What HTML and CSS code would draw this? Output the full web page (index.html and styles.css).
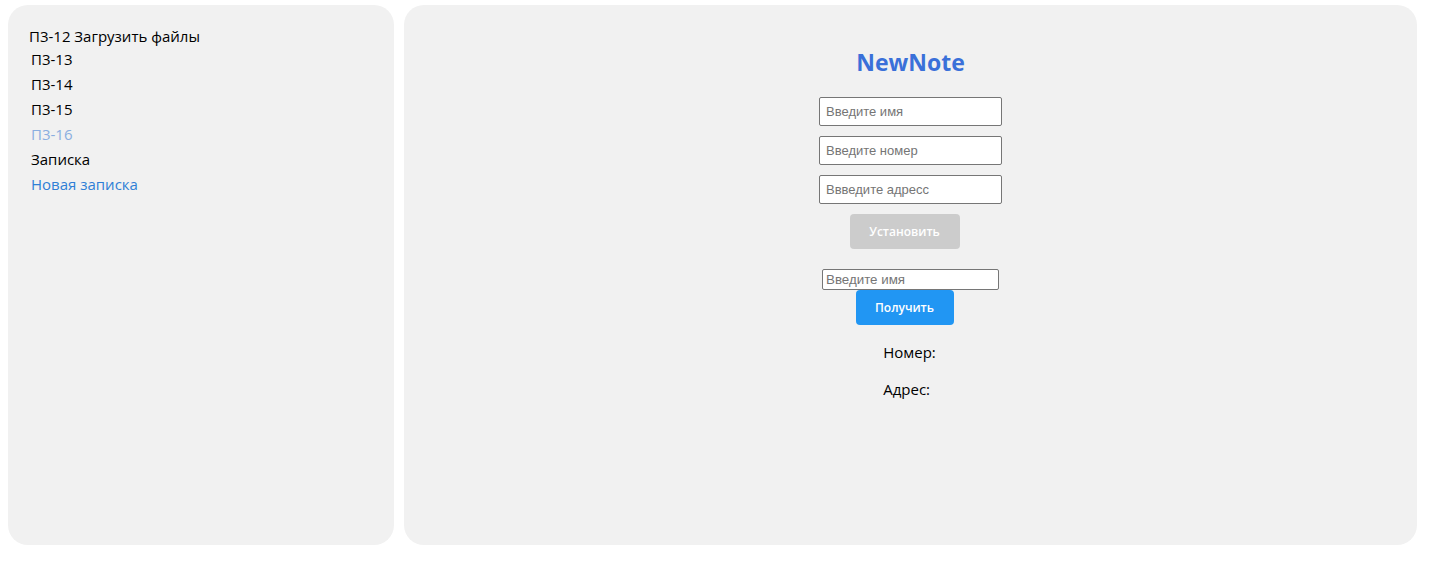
FILE: index.html
```html
<!DOCTYPE html>
<html lang="ru">
<head>
<meta charset="utf-8">
<title>NewNote</title>
<link rel="stylesheet" href="styles.css">
</head>
<body>
<div class="layout">
  <aside class="sidebar">
    <div class="sidebar-head">П3-12 Загрузить файлы</div>
    <ul class="nav">
      <li><a class="nav-link">П3-13</a></li>
      <li><a class="nav-link">П3-14</a></li>
      <li><a class="nav-link">П3-15</a></li>
      <li><a class="nav-link muted">П3-16</a></li>
      <li><a class="nav-link">Записка</a></li>
      <li><a class="nav-link accent">Новая записка</a></li>
    </ul>
  </aside>
  <main class="main">
    <h1 class="title">NewNote</h1>
    <div class="form">
      <input class="field" type="text" placeholder="Введите имя">
      <input class="field" type="text" placeholder="Введите номер">
      <input class="field" type="text" placeholder="Ввведите адресс">
      <button class="btn btn-set">Установить</button>
    </div>
    <div class="lookup">
      <input class="field-small" type="text" placeholder="Введите имя">
      <button class="btn btn-get">Получить</button>
    </div>
    <div class="info-block">
      <p class="info">Номер:</p>
      <p class="info info-addr">Адрес:</p>
    </div>
  </main>
</div>
</body>
</html>
```

FILE: styles.css
```css
* { box-sizing: border-box; }
html, body { background: #fff; }
body {
  margin: 0;
  padding: 5px 8px;
  font-family: "Open Sans", "Noto Sans", sans-serif;
  color: #000;
}
.layout {
  display: flex;
  gap: 10px;
}
.sidebar {
  width: 386px;
  height: 540px;
  background: #f1f1f1;
  border-radius: 20px;
  padding: 20px 0 0 21px;
}
.sidebar-head {
  font-size: 15px;
  line-height: 22px;
}
.nav {
  list-style: none;
  margin: 0;
  padding: 0 0 0 2px;
}
.nav-link {
  display: block;
  font-size: 15px;
  line-height: 25px;
  color: #000;
  text-decoration: none;
}
.nav-link.muted { color: #8aaee0; }
.nav-link.accent { color: #2f7fd6; }
.main {
  width: 1013px;
  height: 540px;
  background: #f1f1f1;
  border-radius: 20px;
  display: flex;
  flex-direction: column;
  align-items: center;
  padding-top: 42px;
}
.title {
  margin: 0 0 20px;
  font-size: 23px;
  line-height: 30px;
  font-weight: 700;
  color: #3a70d9;
}
.form {
  display: flex;
  flex-direction: column;
  align-items: center;
  gap: 10px;
}
.field {
  width: 183px;
  height: 29px;
  border: 1px solid #767676;
  border-radius: 2px;
  padding: 0 6px;
  font-family: "Liberation Sans", Arial, sans-serif;
  font-size: 13px;
  background: #fff;
}
.field::placeholder { color: #757575; }
.btn {
  border: none;
  border-radius: 4px;
  height: 35px;
  color: #fff;
  font-family: "Open Sans", "Noto Sans", sans-serif;
  font-size: 12px;
  font-weight: 600;
  padding: 0;
  margin-right: 12px;
}
.btn-set {
  width: 110px;
  background: #cccccc;
}
.lookup {
  margin-top: 20px;
  display: flex;
  flex-direction: column;
  align-items: center;
}
.field-small {
  width: 177px;
  height: 21px;
  border: 1px solid #767676;
  border-radius: 2px;
  padding: 1px 3px;
  font-family: "Liberation Sans", Arial, sans-serif;
  font-size: 13.33px;
  background: #fff;
}
.field-small::placeholder { color: #757575; }
.btn-get {
  width: 98px;
  background: #2196f3;
}
.info-block {
  margin-top: 17px;
  margin-right: 2px;
  display: flex;
  flex-direction: column;
  align-items: flex-start;
}
.info {
  margin: 0;
  font-size: 15px;
  line-height: 20px;
}
.info-addr { margin-top: 17px; }
```
